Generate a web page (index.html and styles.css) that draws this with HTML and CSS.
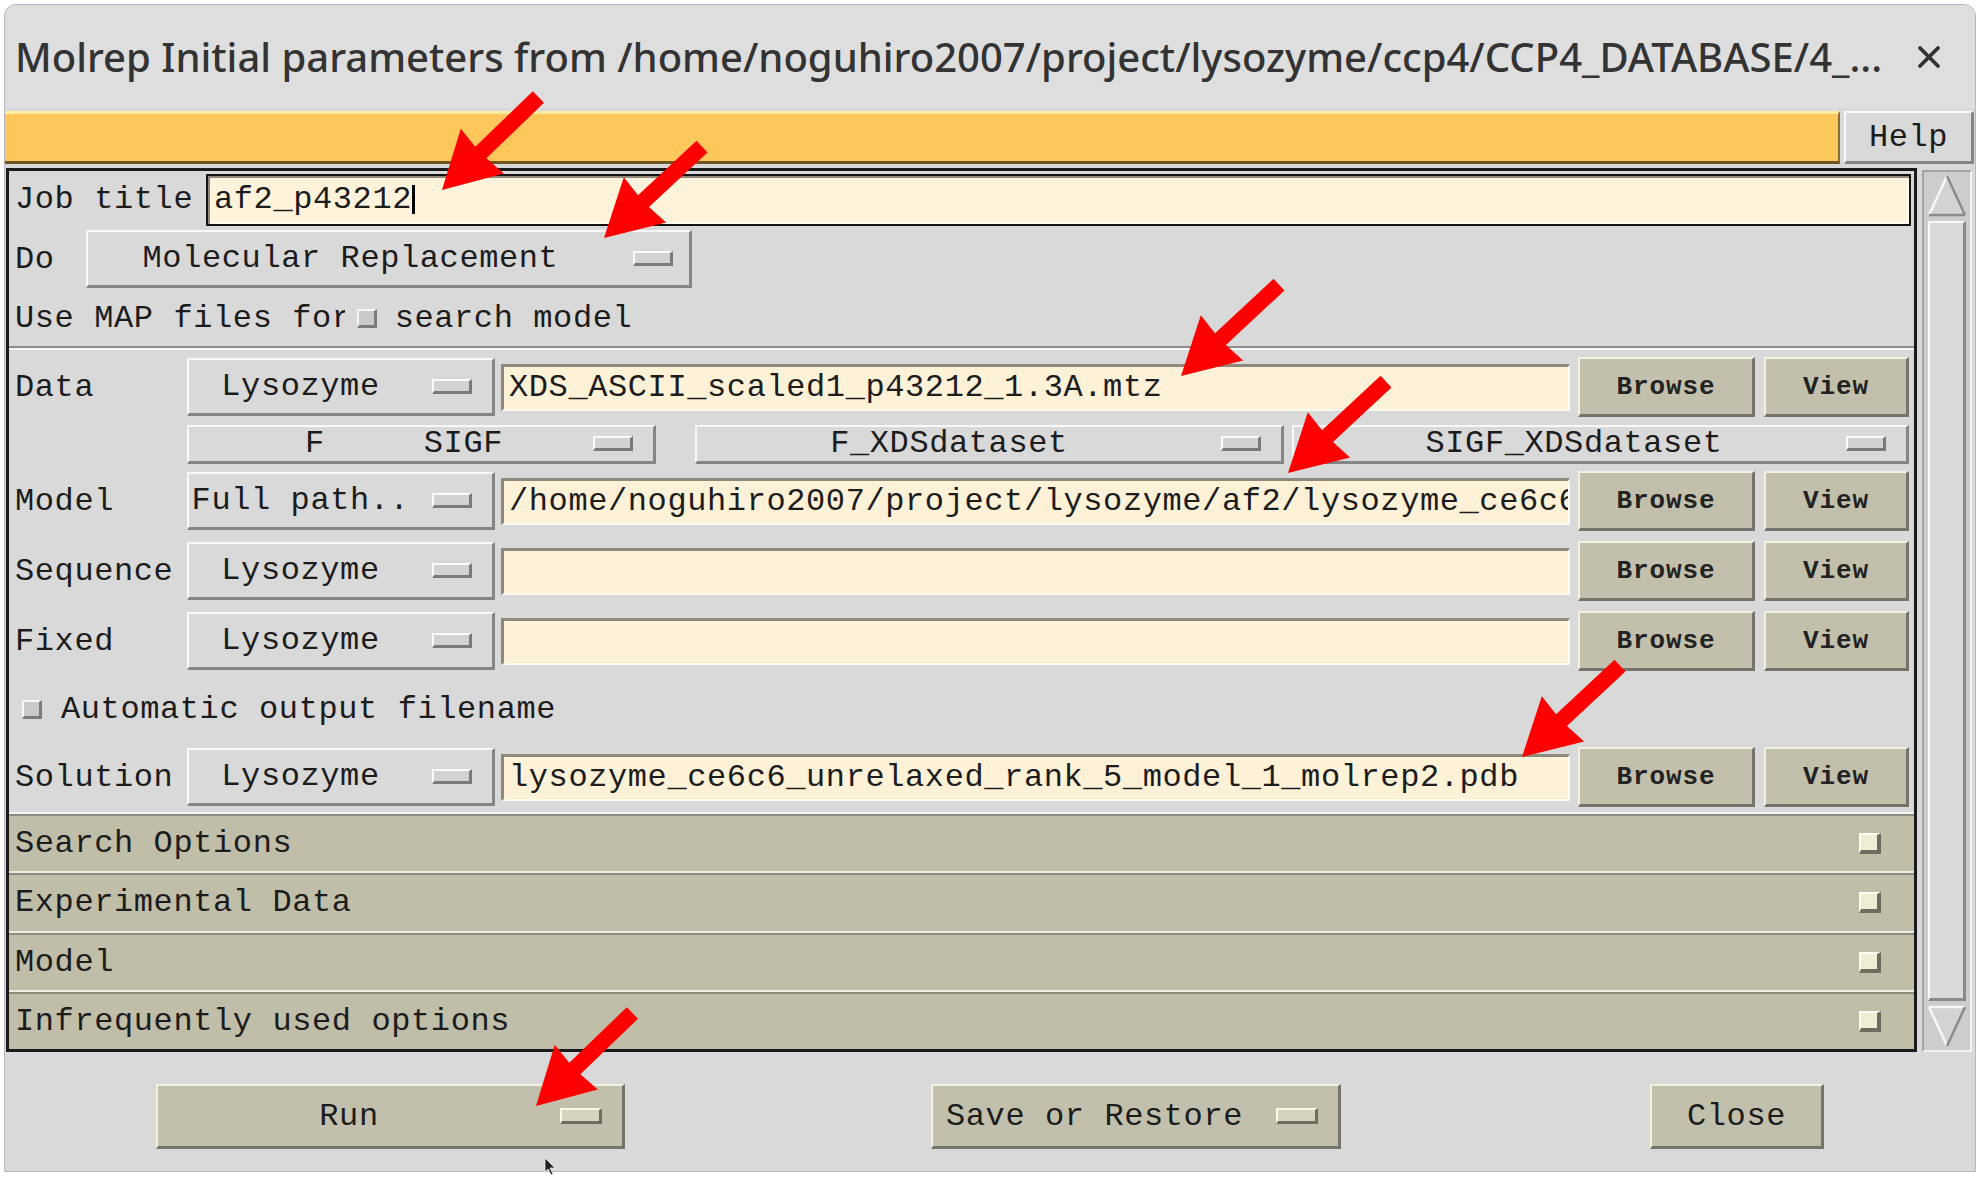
FILE: index.html
```html
<!DOCTYPE html>
<html>
<head>
<meta charset="utf-8">
<title>Molrep Initial parameters</title>
<link rel="stylesheet" href="styles.css">
</head>
<body>
<div class="window">
  <div class="titlebar">
    <span class="title">Molrep Initial parameters from /home/noguhiro2007/project/lysozyme/ccp4/CCP4_DATABASE/4_...</span>
    <svg class="close" width="26" height="26" viewBox="0 0 26 26"><path d="M4 4L22 22M22 4L4 22" stroke="#333" stroke-width="3.8" stroke-linecap="round"/></svg>
  </div>
  <div class="content">
    <div class="topbar">
      <div class="yellow"></div>
      <div class="help">Help</div>
    </div>
    <div class="main">
      <div class="frame">
        <div class="g1">
          <div class="row r-job">
            <span class="lbl lbl-job">Job title</span>
            <div class="entry entry-job"><span class="et">af2_p43212</span><span class="caret"></span></div>
          </div>
          <div class="row r-do">
            <span class="lbl lbl-do">Do</span>
            <div class="mb mb-do"><span class="mb-text">Molecular Replacement</span><span class="ind ind-do"></span></div>
          </div>
          <div class="row r-map">
            <span class="lbl-map">Use MAP files for</span><span class="chk-wrap"><span class="chk"></span></span><span class="map-tail">search model</span>
          </div>
        </div>
        <div class="sep"></div>
        <div class="g2">
          <div class="frow">
            <span class="lbl lbl-file">Data</span>
            <div class="mb mb-file"><span class="mb-text">Lysozyme</span><span class="ind"></span></div>
            <div class="entry entry-file"><span class="et">XDS_ASCII_scaled1_p43212_1.3A.mtz</span></div>
            <div class="kbtn browse">Browse</div>
            <div class="kbtn view">View</div>
          </div>
          <div class="lrow">
            <span class="lbl lbl-file"></span>
            <div class="mb mb-l1"><span class="mb-text mt-l1">F     SIGF</span><span class="ind"></span></div>
            <div class="mb mb-l2"><span class="mb-text">F_XDSdataset</span><span class="ind"></span></div>
            <div class="mb mb-l3"><span class="mb-text">SIGF_XDSdataset</span><span class="ind"></span></div>
          </div>
          <div class="frow">
            <span class="lbl lbl-file">Model</span>
            <div class="mb mb-file"><span class="mb-text">Full path..</span><span class="ind"></span></div>
            <div class="entry entry-file"><span class="et">/home/noguhiro2007/project/lysozyme/af2/lysozyme_ce6c6</span></div>
            <div class="kbtn browse">Browse</div>
            <div class="kbtn view">View</div>
          </div>
          <div class="frow">
            <span class="lbl lbl-file">Sequence</span>
            <div class="mb mb-file"><span class="mb-text">Lysozyme</span><span class="ind"></span></div>
            <div class="entry entry-file"><span class="et"></span></div>
            <div class="kbtn browse">Browse</div>
            <div class="kbtn view">View</div>
          </div>
          <div class="frow">
            <span class="lbl lbl-file">Fixed</span>
            <div class="mb mb-file"><span class="mb-text">Lysozyme</span><span class="ind"></span></div>
            <div class="entry entry-file"><span class="et"></span></div>
            <div class="kbtn browse">Browse</div>
            <div class="kbtn view">View</div>
          </div>
          <div class="arow">
            <span class="chk"></span><span class="auto-text">Automatic output filename</span>
          </div>
          <div class="frow">
            <span class="lbl lbl-file">Solution</span>
            <div class="mb mb-file"><span class="mb-text">Lysozyme</span><span class="ind"></span></div>
            <div class="entry entry-file"><span class="et">lysozyme_ce6c6_unrelaxed_rank_5_model_1_molrep2.pdb</span></div>
            <div class="kbtn browse">Browse</div>
            <div class="kbtn view">View</div>
          </div>
        </div>
        <div class="fold"><span>Search Options</span><span class="fold-ind"></span></div>
        <div class="fold"><span>Experimental Data</span><span class="fold-ind"></span></div>
        <div class="fold"><span>Model</span><span class="fold-ind"></span></div>
        <div class="fold"><span>Infrequently used options</span><span class="fold-ind"></span></div>
      </div>
      <div class="scroll">
        <svg class="sb-arrow" width="40" height="44" viewBox="0 0 40 44">
          <polygon points="2,42 20,3 38,42" fill="#d3d3d3"/>
          <line x1="2" y1="42" x2="20" y2="3" stroke="#f7f7f7" stroke-width="2.5"/>
          <line x1="20" y1="3" x2="38" y2="42" stroke="#8c8c8c" stroke-width="2.5"/>
          <line x1="2" y1="42" x2="38" y2="42" stroke="#8c8c8c" stroke-width="2.5"/>
        </svg>
        <div class="slider"></div>
        <svg class="sb-arrow" width="40" height="44" viewBox="0 0 40 44">
          <polygon points="2,2 38,2 20,41" fill="#d3d3d3"/>
          <line x1="2" y1="2" x2="38" y2="2" stroke="#f7f7f7" stroke-width="2.5"/>
          <line x1="2" y1="2" x2="20" y2="41" stroke="#f7f7f7" stroke-width="2.5"/>
          <line x1="38" y1="2" x2="20" y2="41" stroke="#8c8c8c" stroke-width="2.5"/>
        </svg>
      </div>
    </div>
    <div class="actions">
      <div class="kbtn abtn run"><span class="ab-text">Run</span><span class="kind"></span></div>
      <div class="kbtn abtn save"><span class="ab-text">Save or Restore</span><span class="kind"></span></div>
      <div class="kbtn abtn closebtn"><span class="ab-text">Close</span></div>
    </div>
  </div>
</div>
<svg class="annot" width="1980" height="1185" viewBox="0 0 1980 1185">
  <defs>
    <polygon id="arr" points="0,0 56,-31 54,-8 134,-8 134,8 54,8 56,31" fill="#ff0000"/>
  </defs>
  <use href="#arr" transform="translate(442,190) rotate(-44)"/>
  <use href="#arr" transform="translate(604,238) rotate(-43)"/>
  <use href="#arr" transform="translate(1181,376) rotate(-43)"/>
  <use href="#arr" transform="translate(1288,473) rotate(-43)"/>
  <use href="#arr" transform="translate(1522,757) rotate(-43)"/>
  <use href="#arr" transform="translate(536,1106) rotate(-44)"/>
  <polygon points="545,1158 545,1172 548,1169 551,1175 553,1174 550,1168 555,1168" fill="#222" stroke="#eee" stroke-width="0.8"/>
</svg>
</body>
</html>
```

FILE: styles.css
```css
* {
  box-sizing: border-box;
}

html, body {
  margin: 0;
  padding: 0;
  background: #ffffff;
}

body {
  width: 1980px;
  height: 1185px;
  position: relative;
  overflow: hidden;
  padding: 4px 0 0 4px;
  font-family: "Liberation Mono", "DejaVu Sans Mono", monospace;
  font-size: 32px;
  letter-spacing: 0.6px;
  color: #1c1c1c;
}

.window {
  width: 1972px;
  height: 1168px;
  background: #d9d9d9;
  border: 1px solid #bab3c2;
  border-radius: 12px 12px 0 0;
  overflow: hidden;
  display: flex;
  flex-direction: column;
}

/* title bar */
.titlebar {
  height: 103px;
  flex-shrink: 0;
  display: flex;
  align-items: center;
  padding: 0 33px 0 10px;
  background: #dedede;
}

.title {
  flex: 1;
  min-width: 0;
  font-family: "Noto Sans", "Open Sans", sans-serif;
  font-size: 40px;
  font-weight: 500;
  letter-spacing: 0;
  color: #333333;
  white-space: nowrap;
  overflow: hidden;
}

.close {
  display: block;
  flex-shrink: 0;
}

/* content */
.content {
  flex: 1;
  display: flex;
  flex-direction: column;
  padding: 3px 1px 0 0;
}

.topbar {
  height: 53px;
  display: flex;
}

.yellow {
  flex: 1;
  background: #fdc75b;
  border-top: 3px solid #ffec9c;
  border-bottom: 3px solid #6f5522;
  border-right: 2px solid #8c6c2c;
}

.help {
  width: 130px;
  margin-left: 4px;
  background: #d9d9d9;
  border-style: solid;
  border-width: 2px 3px 3px 2px;
  border-color: #f8f8f8 #858585 #858585 #f8f8f8;
  display: flex;
  align-items: center;
  justify-content: center;
}

.main {
  display: flex;
  margin-top: 4px;
  height: 884px;
}

.frame {
  width: 1911px;
  margin-left: 1px;
  border: 3px solid #1a1a1a;
  display: flex;
  flex-direction: column;
}

.row {
  display: flex;
  align-items: center;
}

.lbl {
  padding-left: 6px;
  white-space: pre;
  flex-shrink: 0;
}

.r-job {
  height: 57px;
}

.lbl-job {
  width: 197px;
}

.r-do {
  height: 62px;
}

.lbl-do {
  width: 77px;
}

.r-map {
  height: 56px;
  padding-left: 6px;
}

.chk-wrap {
  margin-left: -7px;
  padding-left: 12px;
  background: #d9d9d9;
  display: flex;
  align-items: center;
  height: 30px;
}

.chk {
  width: 20px;
  height: 19px;
  background: #c9c9c9;
  border-style: solid;
  border-width: 2px 3px 3px 2px;
  border-color: #f6f6f6 #7b7b7b #7b7b7b #f6f6f6;
  flex-shrink: 0;
}

.map-tail {
  margin-left: 18px;
}

.sep {
  height: 4px;
  border-top: 2px solid #8d8d8d;
  border-bottom: 2px solid #f6f6f6;
}

/* entries */
.entry {
  flex: 1;
  min-width: 0;
  height: 47px;
  background: #fdf1d8;
  border-style: solid;
  border-width: 3px 2px 2px 3px;
  border-color: #8e897c #fffbf0 #fffbf0 #8e897c;
  padding-left: 4px;
  display: flex;
  align-items: center;
  overflow: hidden;
}

.et {
  white-space: pre;
  flex-shrink: 0;
}

.entry-job {
  height: 52px;
  margin-right: 3px;
  border: 2px solid #141414;
  box-shadow: inset 2px 2px 0 #8e897c, inset -2px -2px 0 #fffbf0;
  padding-left: 6px;
  background: #fff3dc;
}

.caret {
  width: 3px;
  height: 29px;
  background: #000;
  margin-left: 0;
}

/* menubuttons */
.mb {
  display: flex;
  align-items: center;
  background: #d9d9d9;
  border-style: solid;
  border-width: 2px 3px 3px 2px;
  border-color: #f8f8f8 #858585 #858585 #f8f8f8;
  flex-shrink: 0;
}

.mb-text {
  flex: 1;
  text-align: center;
  white-space: pre;
}

.ind {
  width: 40px;
  height: 15px;
  margin: 0 20px 0 20px;
  background: #d2d2d2;
  border-style: solid;
  border-width: 2px 3px 3px 2px;
  border-color: #fbfbfb #7a7a7a #7a7a7a #fbfbfb;
  flex-shrink: 0;
}

.mb-do {
  width: 606px;
  height: 58px;
}

.ind-do {
  margin-right: 16px;
}

.g2 {
  padding-top: 2px;
  border-bottom: 2px solid #f3f3f3;
}

.frow {
  height: 70px;
  display: flex;
  align-items: center;
  padding-right: 5px;
}

.lbl-file {
  width: 178px;
}

.mb-file {
  width: 308px;
  height: 58px;
}

.entry-file {
  margin-left: 6px;
  height: 47px;
  padding-left: 5px;
}

/* khaki buttons */
.kbtn {
  background: #c2c0ac;
  border-style: solid;
  border-width: 2px 3px 3px 2px;
  border-color: #f4f2de #76746a #76746a #f4f2de;
  display: flex;
  align-items: center;
  justify-content: center;
  flex-shrink: 0;
}

.browse, .view {
  height: 60px;
  font-size: 26px;
  font-weight: bold;
  letter-spacing: 0.9px;
  color: #222;
}

.browse {
  width: 177px;
  margin-left: 8px;
}

.view {
  width: 145px;
  margin-left: 9px;
}

.lrow {
  height: 44px;
  display: flex;
  align-items: center;
  padding-right: 5px;
}

.mb-l1, .mb-l2, .mb-l3 {
  height: 39px;
}

.mb-l1 {
  width: 469px;
}

.mt-l1 {
  padding-left: 46px;
}

.mb-l2 {
  width: 589px;
  margin-left: 39px;
}

.mb-l3 {
  flex: 1;
  margin-left: 8px;
}

.mb-l3 .mb-text {
  padding-left: 28px;
}

.arow {
  height: 66px;
  display: flex;
  align-items: center;
  padding-left: 13px;
}

.auto-text {
  margin-left: 19px;
}

/* collapsible rows */
.fold {
  flex: 1;
  display: flex;
  align-items: center;
  justify-content: space-between;
  padding: 0 33px 0 6px;
  background: #c0bda9;
  border-top: 2px solid #8d8b7f;
  border-bottom: 2px solid #efede3;
}

.fold:last-child {
  border-bottom: none;
}

.fold-ind {
  width: 22px;
  height: 21px;
  background: #efedd6;
  border-style: solid;
  border-width: 2px 4px 4px 2px;
  border-color: #fffef2 #6e6c5e #6e6c5e #fffef2;
}

/* scrollbar */
.scroll {
  width: 50px;
  margin-left: 5px;
  margin-top: 2px;
  display: flex;
  flex-direction: column;
  align-items: center;
  background: #cdcdcd;
  border-style: solid;
  border-width: 2px;
  border-color: #a3a3a3 #f2f2f2 #f2f2f2 #a3a3a3;
  padding: 1px 2px;
}

.sb-arrow {
  display: block;
  flex-shrink: 0;
}

.slider {
  flex: 1;
  width: 38px;
  margin: 4px 0;
  background: #dadada;
  border-style: solid;
  border-width: 2px 3px 3px 2px;
  border-color: #fafafa #8a8a8a #8a8a8a #fafafa;
}

/* action buttons */
.actions {
  display: flex;
  align-items: center;
  margin-top: 32px;
  height: 65px;
}

.abtn {
  height: 65px;
}

.ab-text {
  flex: 1;
  text-align: center;
  white-space: pre;
}

.kind {
  width: 42px;
  height: 16px;
  margin: 0 20px;
  background: #d6d4c0;
  border-style: solid;
  border-width: 2px 3px 3px 2px;
  border-color: #fbf9e8 #6f6d60 #6f6d60 #fbf9e8;
  flex-shrink: 0;
}

.run {
  width: 469px;
  margin-left: 151px;
}

.save {
  width: 410px;
  margin-left: 306px;
}

.closebtn {
  width: 174px;
  margin-left: 309px;
}

/* annotation overlay */
.annot {
  position: absolute;
  left: 0;
  top: 0;
  pointer-events: none;
}
```
